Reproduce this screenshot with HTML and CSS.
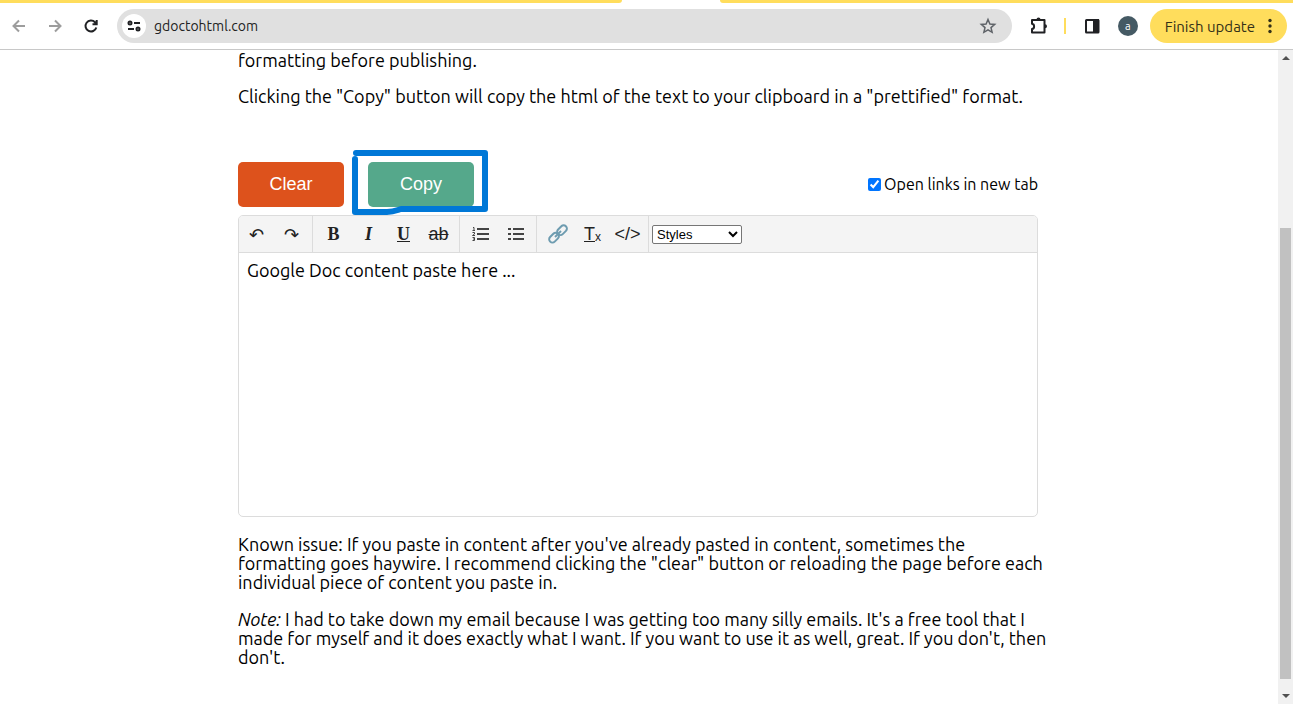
FILE: index.html
```html
<!DOCTYPE html>
<html lang="en">
<head>
<meta charset="utf-8">
<title>gdoctohtml.com</title>
<link rel="stylesheet" href="styles.css">
</head>
<body>
<header class="browser">
  <div class="tabstrip"><div class="tabs-left"></div><div class="tab-active"></div><div class="tabs-right"></div></div>
  <div class="bar">
    <nav class="nav">
      <button class="icon muted" aria-label="Back"><svg width="16" height="16" viewBox="0 0 16 16"><path d="M14 8H3M8 2.500L2.500 8L8 13.500"/></svg></button>
      <button class="icon muted" aria-label="Forward"><svg width="16" height="16" viewBox="0 0 16 16"><path d="M2 8h11M8 2.500L13.500 8L8 13.500"/></svg></button>
      <button class="icon" aria-label="Reload"><svg width="16" height="16" viewBox="0 0 16 16"><path d="M13.300 9.500A5.500 5.500 0 1 1 12 4.200L13.500 5.800M13.700 2v4.200H9.500"/></svg></button>
    </nav>
    <div class="address">
      <button class="site" aria-label="Site information"><svg width="14" height="14" viewBox="0 0 14 14"><circle cx="3" cy="4" r="1.500"/><path d="M7 4h6M1 10h6"/><circle cx="11" cy="10" r="1.500"/></svg></button>
      <input class="url" type="text" aria-label="Address" value="gdoctohtml.com">
      <button class="icon star" aria-label="Bookmark"><svg width="18" height="18" viewBox="0 0 18 18"><path d="M9 2.500L10.900 7L15.700 7.400L12 10.600L13.100 15.300L9 12.800L4.900 15.300L6 10.600L2.300 7.400L7.100 7Z"/></svg></button>
    </div>
    <div class="tools">
      <button class="icon puzzle" aria-label="Extensions"><svg width="20" height="20" viewBox="0 0 20 20"><path d="M3 4H15.500V16.500H3V13C5.800 12.600 5.800 8.200 3 7.800Z"/><path class="knob" d="M7.500 3.500a2 2 0 0 1 4 0zM16 8.200a2 2 0 0 1 0 4z"/></svg></button>
      <span class="divider"></span>
      <button class="icon" aria-label="Side panel"><svg width="16" height="16" viewBox="0 0 16 16"><rect x="2" y="2" width="12.500" height="12.500" rx=".5"/><path d="M10 2h4v12h-4z" fill="currentColor"/></svg></button>
      <button class="avatar" aria-label="Profile">a</button>
      <button class="update">Finish update <svg width="4" height="16" viewBox="0 0 4 16"><circle cx="2" cy="2.500" r="1.700"/><circle cx="2" cy="8" r="1.700"/><circle cx="2" cy="13.500" r="1.700"/></svg></button>
    </div>
  </div>
</header>
<div class="viewport">
  <main class="page">
    <div class="content">
      <p class="first">formatting before publishing.</p>
      <p>Clicking the "Copy" button will copy the html of the text to your clipboard in a "prettified" format.</p>
      <div class="actions">
        <button class="btn clear">Clear</button>
        <div class="copy-wrap">
          <button class="btn copy">Copy</button>
          <svg class="marker" width="138" height="66" viewBox="0 0 138 66"><path d="M5 4H134V60H50C44 62 42 63 36 63H4V10"/></svg>
        </div>
        <label class="newtab"><input type="checkbox" checked>Open links in new tab</label>
      </div>
      <section class="editor">
        <div class="toolbar">
          <div class="group history">
            <button class="tool" aria-label="Undo">↶</button>
            <button class="tool" aria-label="Redo">↷</button>
          </div>
          <div class="group">
            <button class="tool serif"><b>B</b></button>
            <button class="tool serif"><b><i>I</i></b></button>
            <button class="tool serif"><b><u>U</u></b></button>
            <button class="tool"><s>ab</s></button>
          </div>
          <div class="group">
            <button class="tool" aria-label="Numbered list"><svg width="18" height="16" viewBox="0 0 18 16"><path class="rule" d="M5 3h12M5 8h12M5 13h12"/><path class="num" d="M1 1.500h1v3M.5 4.500h2.500M.5 6.500H2.500V8L.5 9.500H3M.5 11.500H2.500V14.500H.5M1 13h1.500"/></svg></button>
            <button class="tool" aria-label="Bulleted list"><svg width="18" height="16" viewBox="0 0 18 16"><path class="rule" d="M6 3h11M6 8h11M6 13h11"/><path class="dots" d="M1 3h3M1 8h3M1 13h3"/></svg></button>
          </div>
          <div class="group">
            <button class="tool" aria-label="Link"><svg width="22" height="22" viewBox="0 0 22 22"><g class="chain"><rect x="9.500" y="4" width="11" height="6.500" rx="3.200" transform="rotate(-45 15 7.200)"/><rect x="1.500" y="11.500" width="11" height="6.500" rx="3.200" transform="rotate(-45 7 14.700)"/><path d="M8 14l6-6"/></g></svg></button>
            <button class="tool" aria-label="Clear formatting"><u>T</u><sub>x</sub></button>
            <button class="tool">&lt;/&gt;</button>
          </div>
          <select class="styles" aria-label="Styles"><option>Styles</option></select>
        </div>
        <div class="area" contenteditable="true" role="textbox" aria-label="Content">Google Doc content paste here ...</div>
      </section>
      <p>Known issue: If you paste in content after you've already pasted in content, sometimes the<br>formatting goes haywire. I recommend clicking the "clear" button or reloading the page before each<br>individual piece of content you paste in.</p>
      <p><em>Note:</em> I had to take down my email because I was getting too many silly emails. It's a free tool that I<br>made for myself and it does exactly what I want. If you want to use it as well, great. If you don't, then<br>don't.</p>
    </div>
  </main>
  <div class="scrollbar"><span class="arrow up"></span><span class="thumb"></span><span class="arrow down"></span></div>
</div>
</body>
</html>
```
FILE: styles.css
```css
* { box-sizing: border-box; }
body { margin: 0; height: 100vh; display: flex; flex-direction: column; background: #fff; color: #000; font-family: Ubuntu, "Noto Sans", sans-serif; overflow: hidden; }
button { font: inherit; color: inherit; border: 0; background: none; padding: 0; }
svg { display: block; fill: none; stroke: currentColor; stroke-width: 2; }

.browser { border-bottom: 1px solid #c8c8c8; color: #202124; }
.tabstrip { display: flex; height: 3px; background: #fff; }
.tabs-left { flex: 622; background: #ffdd5c; border-radius: 0 0 6px 0; }
.tab-active { flex: 98; }
.tabs-right { flex: 573; background: #ffdd5c; border-radius: 0 0 0 6px; }
.bar { display: flex; align-items: center; height: 46px; padding: 0 6px 0 11px; }
.nav { display: flex; gap: 20px; margin-right: 18px; }
.icon { display: flex; }
.muted { color: #9d9d9d; }
.address { flex: 1; display: flex; align-items: center; height: 34px; padding: 0 15px 0 5px; border-radius: 17px; background: #e0e0e0; }
.site { display: flex; align-items: center; justify-content: center; width: 24px; height: 24px; border-radius: 50%; background: #fff; }
.url { flex: 1; min-width: 0; border: 0; padding: 0 8px; background: none; color: #222; font: 14px Ubuntu, "Noto Sans", sans-serif; }
.star { color: #5f6368; }
.star svg { stroke-width: 1.5; }
.tools { display: flex; align-items: center; margin-left: 17px; }
.puzzle svg { stroke-linejoin: round; }
.knob { fill: currentColor; stroke: none; }
.divider { width: 2px; height: 16px; margin: 0 18px 0 15px; background: #ffdd5c; }
.avatar { width: 20px; height: 20px; margin: 0 12px 0 18px; border-radius: 50%; background: #455a64; color: #fff; font-size: 11px; line-height: 18px; }
.update { display: flex; align-items: center; gap: 13px; height: 34px; padding: 0 15px; border-radius: 17px; background: #ffdd5c; color: #333018; font-size: 15px; }
.update svg { fill: #333018; stroke: none; }

.viewport { flex: 1; min-height: 0; display: flex; }
.page { flex: 1; min-width: 0; overflow: hidden; padding: 0 17px 0 15px; }
.content { max-width: 800px; margin: 0 auto; font-size: 18px; line-height: 19px; }
p { margin: 18px 0; white-space: nowrap; }
.first { margin: 1px 0 17px; }
.first + p { margin-top: 17px; }

.actions { display: flex; align-items: center; margin: 56px 0 8px; }
.btn { width: 106px; height: 45px; border-radius: 5px; color: #fff; font: 18px "Liberation Sans", Arial, sans-serif; }
.clear { background: #dd521c; }
.copy { background: #55a88b; }
.copy-wrap { position: relative; margin-left: 24px; }
.marker { position: absolute; left: -17px; top: -13px; color: #0078d7; stroke-width: 6; stroke-linecap: round; stroke-linejoin: round; pointer-events: none; z-index: 1; }
.newtab { display: flex; align-items: center; gap: 3px; margin-left: auto; font-size: 16px; }
.newtab input { width: 13px; height: 13px; margin: 0; accent-color: #0075ff; }

.editor { border: 1px solid #dcdcdc; border-radius: 5px; overflow: hidden; }
.toolbar { display: flex; align-items: center; height: 37px; background: #f4f4f4; border-bottom: 1px solid #dcdcdc; color: #222; }
.group { display: flex; align-items: center; height: 36px; padding: 0 3px; border-right: 1px solid #dcdcdc; }
.tool { display: flex; align-items: center; justify-content: center; width: 35px; height: 36px; font: 18px "Liberation Sans", Arial, sans-serif; }
.history { padding-left: 0; }
.history .tool { font-family: "DejaVu Sans", sans-serif; }
.serif { font: 18px "Liberation Serif", serif; }
.tool sub { font-size: 12px; vertical-align: baseline; padding-top: 6px; }
.rule { stroke: #444; }
.dots { stroke: #444; }
.num { stroke: #444; stroke-width: 1; }
.chain { stroke: #6e9cb0; stroke-width: 2; }
.styles { width: 90px; height: 19px; margin-left: 3px; padding: 0; border: 1px solid #767676; border-radius: 2px; background: #fff; color: #000; font: 13px "Liberation Sans", Arial, sans-serif; }
.area { min-height: 263px; padding: 8px; outline: none; }

.scrollbar { display: flex; flex-direction: column; align-items: center; width: 15px; padding: 6px 0; background: #f1f1f1; }
.arrow { border: 4px solid transparent; }
.up { border-top: 0; border-bottom-color: #505050; }
.down { border-bottom: 0; border-top-color: #505050; }
.thumb { width: 11px; height: 451px; margin: auto 0 15px; background: #c1c1c1; }
```
